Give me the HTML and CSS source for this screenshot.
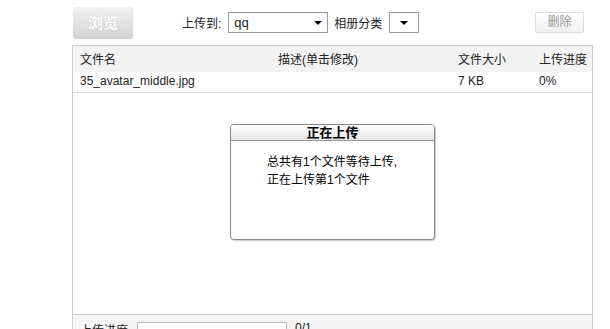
FILE: index.html
```html
<!DOCTYPE html>
<html lang="zh-CN">
<head>
    <meta charset="UTF-8">
    <title>上传照片</title>
    <link rel="stylesheet" href="styles.css">
</head>
<body>
    <div class="wrap">
        <div class="toolbar">
            <div class="browse-btn">浏览</div>
            <span class="label to-label">上传到:</span>
            <div class="select album-select">
                <span class="select-text">qq</span>
                <span class="arrow"></span>
            </div>
            <span class="label">相册分类</span>
            <div class="select cat-select">
                <span class="arrow"></span>
            </div>
            <div class="delete-btn">删除</div>
        </div>

        <!-- File list -->
        <div class="panel">
            <div class="list">
                <div class="row head-row">
                    <div class="cell name">文件名</div>
                    <div class="cell desc">描述(单击修改)</div>
                    <div class="cell size">文件大小</div>
                    <div class="cell prog">上传进度</div>
                </div>
                <div class="row file-row">
                    <div class="cell name">35_avatar_middle.jpg</div>
                    <div class="cell desc"></div>
                    <div class="cell size">7 KB</div>
                    <div class="cell prog">0%</div>
                </div>

                <!-- Upload dialog -->
                <div class="dialog">
                    <div class="dialog-title">正在上传</div>
                    <div class="dialog-body">
                        总共有1个文件等待上传,<br>
                        正在上传第1个文件
                    </div>
                </div>
            </div>
            <div class="footer">
                <span class="label">上传进度</span>
                <div class="progress"></div>
                <span class="count">0/1</span>
            </div>
        </div>
    </div>
</body>
</html>
```

FILE: styles.css
```css
* {
    margin: 0;
    padding: 0;
    box-sizing: border-box;
}
body {
    font-family: "Liberation Sans", Arial, "Noto Sans CJK SC", sans-serif;
    font-size: 12px;
    color: #222;
    background-color: #fff;
    overflow: hidden;
}
.wrap {
    margin-left: 72px;
    width: 521px;
}

/* Toolbar */
.toolbar {
    display: flex;
    align-items: center;
    height: 38px;
    padding: 7px 9px 0 1px;
}
.browse-btn {
    width: 60px;
    height: 31px;
    line-height: 31px;
    text-align: center;
    font-size: 15px;
    font-weight: bold;
    color: #fff;
    border-radius: 3px;
    background: linear-gradient(#f2f2f2, #d3d3d3);
    box-shadow: 0 1px 1px #ccc;
    text-shadow: 0 0 1px #bbb;
}
.label {
    white-space: nowrap;
}
.to-label {
    margin-left: 49px;
}
.select {
    height: 21px;
    border: 1px solid #999;
    background-color: #fff;
    display: flex;
    align-items: center;
    margin-left: 7px;
    margin-right: 6px;
}
.album-select {
    width: 100px;
    padding: 0 5px;
}
.select-text {
    flex: 1;
    font-size: 13px;
}
.cat-select {
    width: 30px;
    justify-content: center;
}
.arrow {
    width: 0;
    height: 0;
    border-left: 4px solid transparent;
    border-right: 4px solid transparent;
    border-top: 4px solid #000;
}
.delete-btn {
    margin-left: auto;
    width: 49px;
    height: 21px;
    line-height: 19px;
    text-align: center;
    color: #999;
    border: 1px solid #ddd;
    border-radius: 2px;
    background: linear-gradient(#fff, #f0f0f0);
}

/* Panel */
.panel {
    margin-top: 7px;
    border: 1px solid #ccc;
    border-bottom: none;
}
.list {
    position: relative;
    height: 269px;
    border-bottom: 1px solid #ccc;
}
.row {
    display: grid;
    grid-template-columns: 205px 180px 81px 1fr;
}
.head-row {
    height: 26px;
    line-height: 29px;
    background-color: #f3f3f3;
}
.file-row {
    height: 21px;
    line-height: 18px;
    border-bottom: 1px solid #ddd;
}
.cell.name {
    padding-left: 7px;
}

/* Upload dialog */
.dialog {
    position: absolute;
    left: 157px;
    top: 78px;
    width: 205px;
    height: 116px;
    border: 1px solid #888;
    border-radius: 4px;
    background-color: #fff;
    box-shadow: 1px 1px 1px #ccc;
    overflow: hidden;
}
.dialog-title {
    height: 16px;
    line-height: 15px;
    text-align: center;
    font-size: 13px;
    font-weight: bold;
    color: #000;
    border-bottom: 1px solid #999;
    background: linear-gradient(#fff, #e6e6e6);
}
.dialog-body {
    padding: 12px 0 0 36px;
    line-height: 18px;
    color: #000;
}

/* Footer */
.footer {
    display: flex;
    height: 30px;
    padding: 6px 0 0 7px;
    align-items: flex-start;
    background-color: #f5f5f5;
}
.progress {
    width: 150px;
    height: 14px;
    margin-left: 9px;
    margin-top: 1px;
    border: 1px solid #bbb;
    background-color: #fff;
}
.count {
    margin-left: 8px;
}
```
